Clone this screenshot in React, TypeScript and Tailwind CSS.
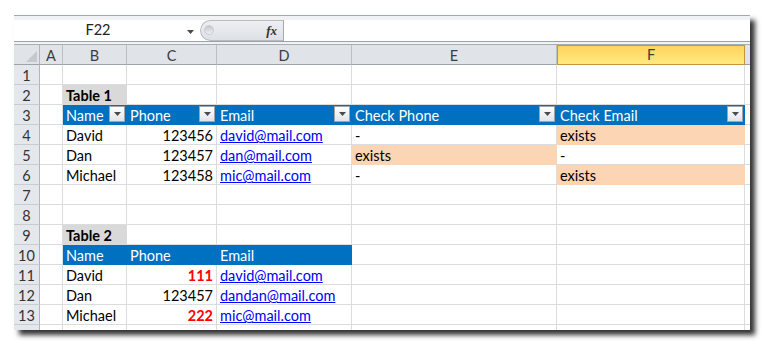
import React from "react";

type Cell = {
  t?: string;
  kind?: "title" | "head" | "link" | "red" | "num" | "hit";
  filter?: boolean;
};

const colW: Record<string, string> = {
  A: "w-[23px]",
  B: "w-[64px]",
  C: "w-[90px]",
  D: "w-[135px]",
  E: "w-[205px]",
  F: "w-[188px]",
  G: "w-[64px]",
};

const cols = ["A", "B", "C", "D", "E", "F", "G"];

const rows: Record<number, Record<string, Cell>> = {
  2: { B: { t: "Table 1", kind: "title" } },
  3: {
    B: { t: "Name", kind: "head", filter: true },
    C: { t: "Phone", kind: "head", filter: true },
    D: { t: "Email", kind: "head", filter: true },
    E: { t: "Check Phone", kind: "head", filter: true },
    F: { t: "Check Email", kind: "head", filter: true },
  },
  4: {
    B: { t: "David" },
    C: { t: "123456", kind: "num" },
    D: { t: "david@mail.com", kind: "link" },
    E: { t: "-" },
    F: { t: "exists", kind: "hit" },
  },
  5: {
    B: { t: "Dan" },
    C: { t: "123457", kind: "num" },
    D: { t: "dan@mail.com", kind: "link" },
    E: { t: "exists", kind: "hit" },
    F: { t: "-" },
  },
  6: {
    B: { t: "Michael" },
    C: { t: "123458", kind: "num" },
    D: { t: "mic@mail.com", kind: "link" },
    E: { t: "-" },
    F: { t: "exists", kind: "hit" },
  },
  9: { B: { t: "Table 2", kind: "title" } },
  10: {
    B: { t: "Name", kind: "head" },
    C: { t: "Phone", kind: "head" },
    D: { t: "Email", kind: "head" },
  },
  11: {
    B: { t: "David" },
    C: { t: "111", kind: "red" },
    D: { t: "david@mail.com", kind: "link" },
  },
  12: {
    B: { t: "Dan" },
    C: { t: "123457", kind: "num" },
    D: { t: "dandan@mail.com", kind: "link" },
  },
  13: {
    B: { t: "Michael" },
    C: { t: "222", kind: "red" },
    D: { t: "mic@mail.com", kind: "link" },
  },
};

function DownTriangle() {
  return (
    <svg width="7" height="4" viewBox="0 0 7 4">
      <polygon points="0,0 7,0 3.5,4" fill="#4a4a4a" />
    </svg>
  );
}

function FilterButton() {
  return (
    <div className="absolute right-[1px] top-[1px] w-4 h-4 border border-[#a3a3a3] bg-gradient-to-b from-white to-[#e2e4e7] flex items-center justify-center">
      <DownTriangle />
    </div>
  );
}

function GridCell({ col, cell }: { col: string; cell?: Cell }) {
  const kind = cell?.kind;
  let look = "bg-white border-[#dadcdd] text-black";
  if (kind === "title") look = "bg-[#d9d9d9] border-[#d9d9d9] text-black font-bold";
  if (kind === "head") look = "bg-[#0070c0] border-[#0070c0] text-white";
  if (kind === "hit") look = "bg-[#fcd5b4] border-[#fcd5b4] text-black";
  if (kind === "link") look = "bg-white border-[#dadcdd] text-[#0000ff] underline";
  if (kind === "red") look = "bg-white border-[#dadcdd] text-[#ff0000] font-bold text-right";
  if (kind === "num") look = "bg-white border-[#dadcdd] text-black text-right";

  return (
    <div
      className={`relative shrink-0 h-5 border-r border-b px-[3px] pt-[1px] leading-[19px] whitespace-nowrap overflow-hidden ${colW[col]} ${look}`}
    >
      {cell?.t}
      {cell?.filter && <FilterButton />}
    </div>
  );
}

function RowHeader({ n }: { n: number }) {
  return (
    <div className="shrink-0 w-[26px] h-5 border-r border-r-[#b1b6bc] border-b border-b-[#c9cdd2] bg-[#e4e7eb] text-center text-[#333] leading-[19px] pt-[1px]">
      {n < 14 ? n : ""}
    </div>
  );
}

export default function App() {
  const rowNums = Array.from({ length: 14 }, (_, i) => i + 1);

  return (
    <div className="w-[764px] h-[345px] bg-white pl-[14px] pt-[15px] font-['Lato','Liberation_Sans',sans-serif] text-[14.5px]">
      <div className="w-[736px] h-[315px] overflow-hidden bg-white shadow-[5px_5px_5px_rgba(0,0,0,0.8)]">
        {/* top strip */}
        <div className="h-[5px] bg-[#f0f2f4] border-t border-[#a4a9b0]" />

        {/* formula bar */}
        <div className="h-[21px] flex bg-white">
          <div className="relative w-[186px] h-full flex items-center">
            <span className="w-[168px] text-center text-[#222] leading-none">F22</span>
            <span className="absolute left-[173px] top-[10px] flex">
              <DownTriangle />
            </span>
          </div>
          <div className="relative w-[83px] h-full rounded-l-full border-l border-y border-[#b8bdc3] bg-gradient-to-b from-[#edeff2] to-[#dde1e6] flex items-center justify-end pr-[6px]">
            <span className="absolute left-[3px] top-[4px] w-[10px] h-[10px] rounded-full bg-gradient-to-b from-[#c3c7cc] to-[#eef0f2] border border-[#c9cdd2]" />
            <span className="font-['Liberation_Serif',serif] italic font-bold text-[13px] text-[#333] leading-none">
              fx
            </span>
          </div>
          <div className="flex-1 h-full border-l border-[#a4a9b0] bg-white" />
        </div>

        {/* separator */}
        <div className="h-[4px] bg-[#f0f2f4] border-t border-t-[#9ba1a8] border-b border-b-[#a8adb3]" />

        {/* column headers */}
        <div className="flex">
          <div className="shrink-0 w-[26px] h-5 border-r border-b border-r-[#b1b6bc] border-b-[#9ea3a9] bg-[#e0e3e7] flex items-end justify-end pr-[2px] pb-[2px]">
            <svg width="11" height="11" viewBox="0 0 11 11">
              <polygon points="11,0 11,11 0,11" fill="#c5c9ce" />
            </svg>
          </div>
          {cols.map((c) =>
            c === "F" ? (
              <div
                key={c}
                className={`shrink-0 h-5 border border-[#c6943a] bg-gradient-to-b from-[#ffd35c] to-[#ffea80] text-center text-[#3d3d3d] leading-[18px] ${colW[c]}`}
              >
                {c}
              </div>
            ) : (
              <div
                key={c}
                className={`shrink-0 h-5 border-r border-r-[#bcc0c6] border-b border-b-[#9ea3a9] bg-[#e0e3e7] text-center text-[#3d3d3d] leading-[19px] pt-[1px] ${colW[c]}`}
              >
                {c === "G" ? "" : c}
              </div>
            )
          )}
        </div>

        {/* rows */}
        {rowNums.map((n) => (
          <div key={n} className="flex">
            <RowHeader n={n} />
            {cols.map((c) => (
              <GridCell key={c} col={c} cell={rows[n]?.[c]} />
            ))}
          </div>
        ))}
      </div>
    </div>
  );
}
